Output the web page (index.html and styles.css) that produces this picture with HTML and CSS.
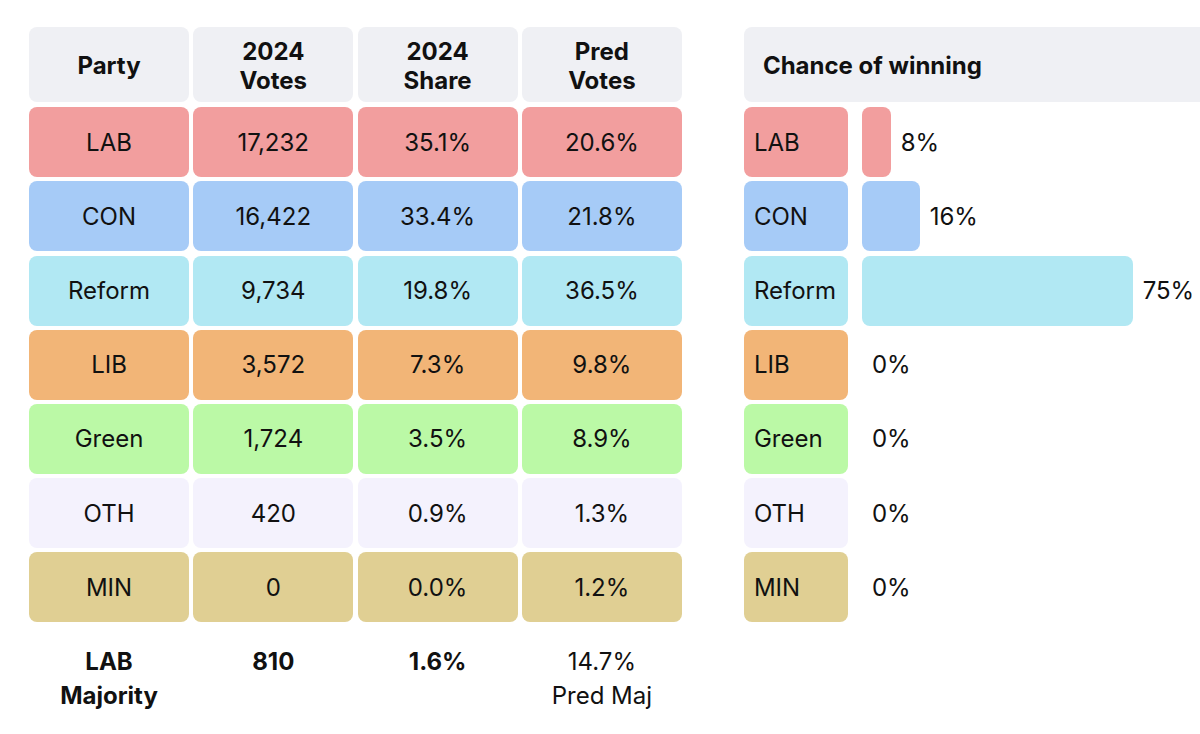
FILE: index.html
```html
<!DOCTYPE html>
<html lang="en">
<head>
<meta charset="utf-8">
<title>Seat prediction</title>
<link rel="stylesheet" href="styles.css">
</head>
<body>
<div class="page">
  <div class="results">
    <div class="cell head">Party</div>
    <div class="cell head">2024<br>Votes</div>
    <div class="cell head">2024<br>Share</div>
    <div class="cell head">Pred<br>Votes</div>

    <div class="cell lab">LAB</div><div class="cell lab">17,232</div><div class="cell lab">35.1%</div><div class="cell lab">20.6%</div>
    <div class="cell con">CON</div><div class="cell con">16,422</div><div class="cell con">33.4%</div><div class="cell con">21.8%</div>
    <div class="cell ref">Reform</div><div class="cell ref">9,734</div><div class="cell ref">19.8%</div><div class="cell ref">36.5%</div>
    <div class="cell lib">LIB</div><div class="cell lib">3,572</div><div class="cell lib">7.3%</div><div class="cell lib">9.8%</div>
    <div class="cell grn">Green</div><div class="cell grn">1,724</div><div class="cell grn">3.5%</div><div class="cell grn">8.9%</div>
    <div class="cell oth">OTH</div><div class="cell oth">420</div><div class="cell oth">0.9%</div><div class="cell oth">1.3%</div>
    <div class="cell min">MIN</div><div class="cell min">0</div><div class="cell min">0.0%</div><div class="cell min">1.2%</div>

    <div class="foot bold">LAB<br>Majority</div>
    <div class="foot bold">810</div>
    <div class="foot bold">1.6%</div>
    <div class="foot">14.7%<br>Pred Maj</div>
  </div>

  <div class="chance">
    <div class="chance-head">Chance of winning</div>

    <div class="label lab">LAB</div>
    <div class="barrow"><div class="bar lab" style="width:8%"></div><span class="pct">8%</span></div>
    <div class="label con">CON</div>
    <div class="barrow"><div class="bar con" style="width:16%"></div><span class="pct">16%</span></div>
    <div class="label ref">Reform</div>
    <div class="barrow"><div class="bar ref" style="width:75%"></div><span class="pct">75%</span></div>
    <div class="label lib">LIB</div>
    <div class="barrow"><div class="bar lib" style="width:0%"></div><span class="pct">0%</span></div>
    <div class="label grn">Green</div>
    <div class="barrow"><div class="bar grn" style="width:0%"></div><span class="pct">0%</span></div>
    <div class="label oth">OTH</div>
    <div class="barrow"><div class="bar oth" style="width:0%"></div><span class="pct">0%</span></div>
    <div class="label min">MIN</div>
    <div class="barrow"><div class="bar min" style="width:0%"></div><span class="pct">0%</span></div>
  </div>
</div>
</body>
</html>
```

FILE: styles.css
```css
html, body {
  margin: 0;
  padding: 0;
  background: #ffffff;
  overflow: hidden;
}
body {
  font-family: "Inter", "Noto Sans", "Liberation Sans", sans-serif;
  color: #111111;
  font-size: 24px;
}
.page {
  display: flex;
  align-items: flex-start;
  box-sizing: border-box;
  width: 1200px;
  height: 734px;
  overflow: hidden;
  padding: 27px 0 0 29px;
  gap: 62px;
}
.results {
  display: grid;
  flex: none;
  grid-template-columns: repeat(4, 160px);
  grid-template-rows: 76px repeat(7, 70px) auto;
  column-gap: 4.3px;
  row-gap: 4.2px;
}
.cell {
  border-radius: 8px;
  display: flex;
  align-items: center;
  justify-content: center;
  text-align: center;
}
.head {
  background: #eff0f4;
  font-weight: 700;
  line-height: 29px;
  margin-bottom: 1px;
  padding-top: 2px;
}
.lab { background: #f29e9e; }
.con { background: #a6cbf7; }
.ref { background: #b1e8f3; }
.lib { background: #f2b577; }
.grn { background: #bbf9a6; }
.oth { background: #f4f2fd; }
.min { background: #e0cf93; }

.foot {
  text-align: center;
  line-height: 34px;
  padding-top: 18px;
}
.bold { font-weight: 700; }

.chance {
  display: grid;
  flex: none;
  grid-template-columns: 104px 1fr;
  grid-template-rows: 76px repeat(7, 70px);
  column-gap: 14px;
  row-gap: 4.2px;
  width: 480px;
}
.chance-head {
  grid-column: 1 / 3;
  background: #eff0f4;
  border-radius: 8px;
  display: flex;
  align-items: center;
  padding-left: 19px;
  font-weight: 700;
  margin-bottom: 1px;
  padding-top: 2px;
}
.label {
  border-radius: 8px;
  display: flex;
  align-items: center;
  padding-left: 10px;
}
.barrow {
  display: flex;
  align-items: center;
  width: 361px;
}
.bar {
  height: 100%;
  border-radius: 8px;
  flex: none;
}
.pct {
  margin-left: 10px;
  white-space: nowrap;
}
```
